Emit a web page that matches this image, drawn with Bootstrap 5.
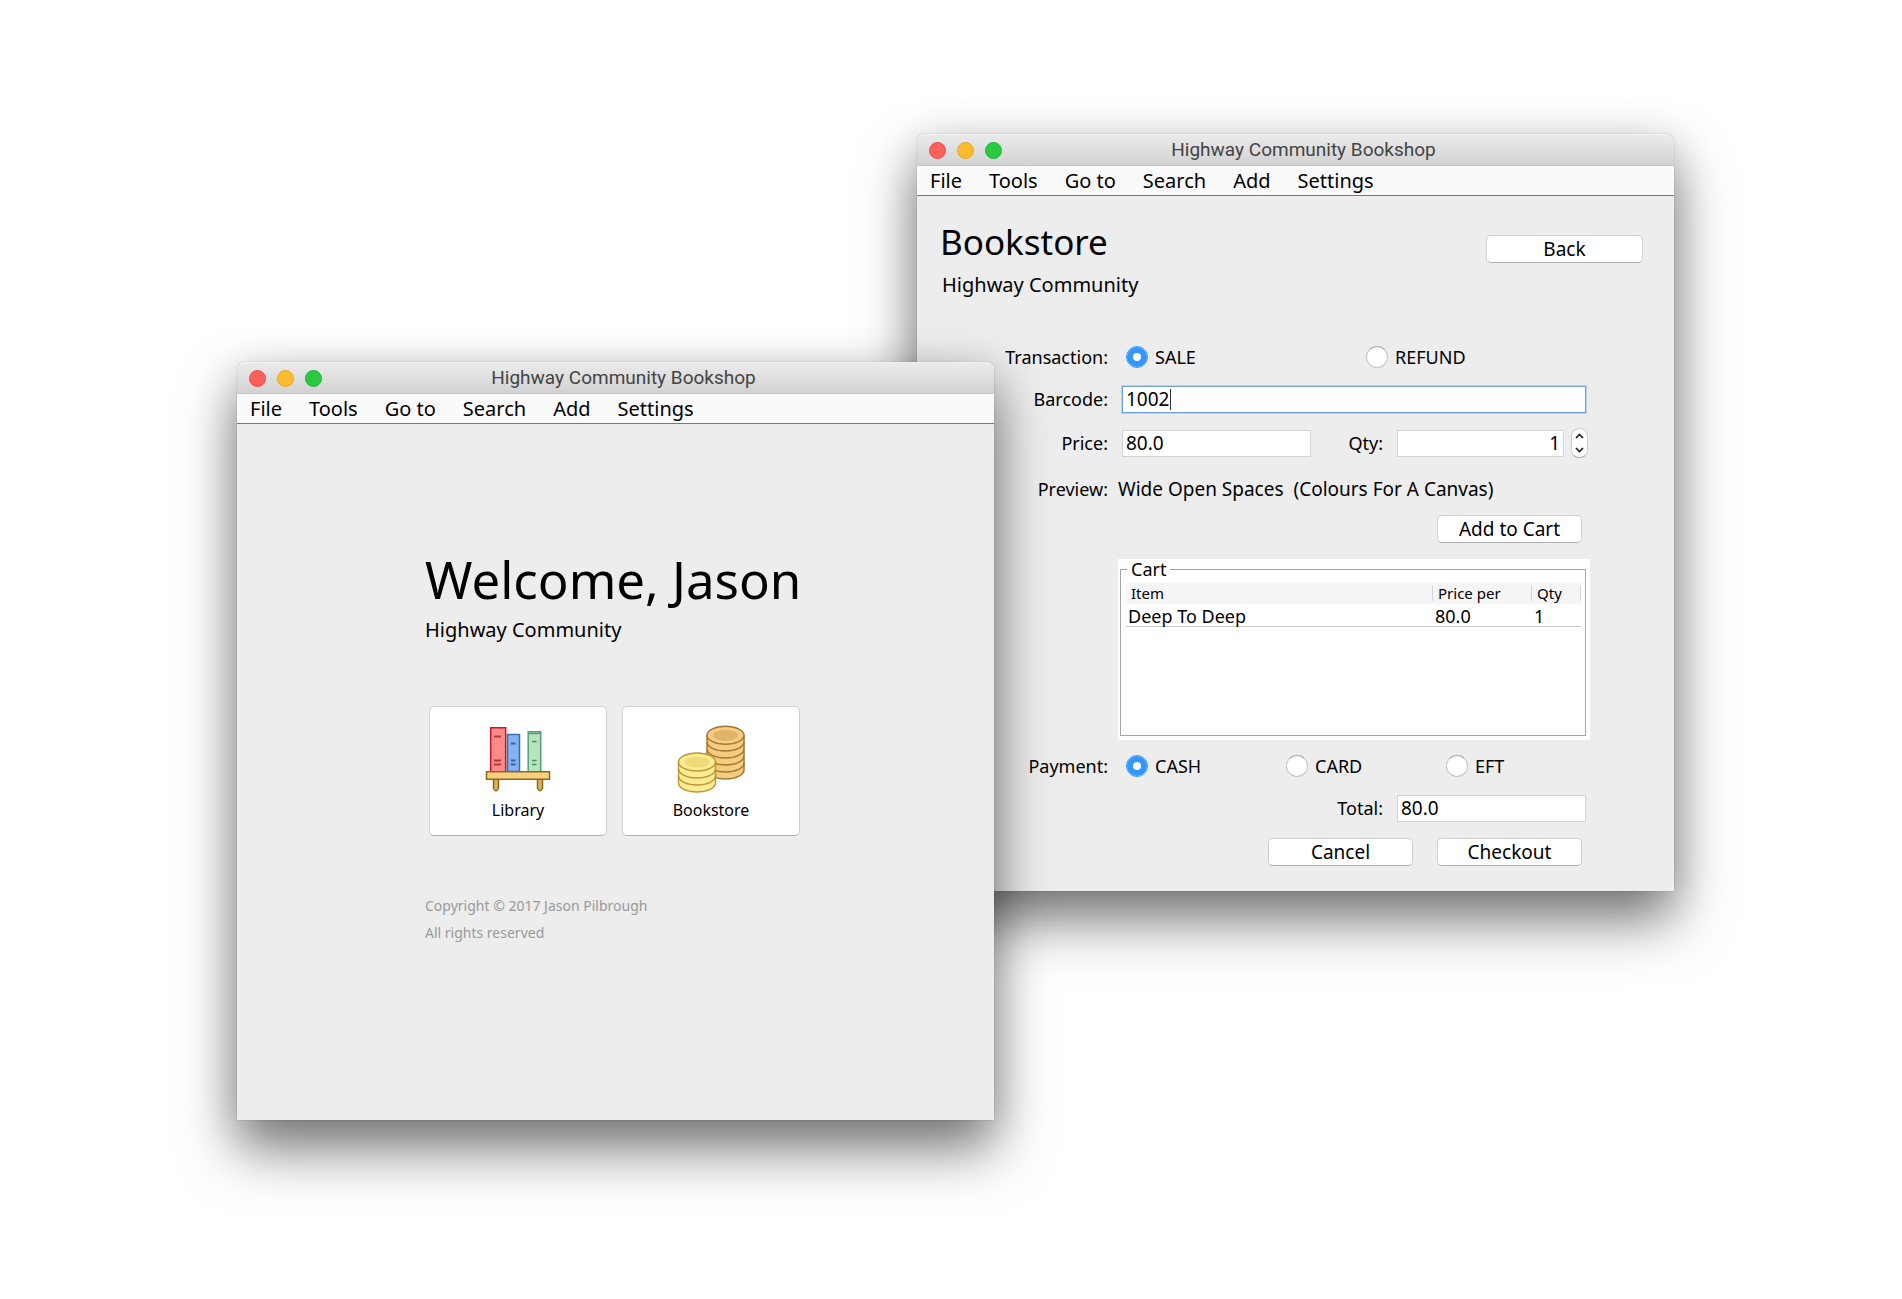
<!DOCTYPE html>
<html lang="en">
<head>
<meta charset="utf-8">
<meta name="viewport" content="width=device-width, initial-scale=1">
<title>Highway Community Bookshop</title>
<link href="https://cdn.jsdelivr.net/npm/bootstrap@5.3.0/dist/css/bootstrap.min.css" rel="stylesheet">
<style>
  body { background: #fff; color: #000; font: 18px/28px "Noto Sans", sans-serif; }
  .desktop { min-height: 100vh; }

  /* windows are freely placed on the desktop */
  .app-window {
    width: 757px;
    background: #ededed;
    border-radius: 7px 7px 0 0;
    box-shadow: 0 0 1px rgba(0,0,0,.5), 0 30px 55px rgba(0,0,0,.5), 0 6px 44px rgba(0,0,0,.14);
  }
  .win-shop { left: 917px; top: 134px; }
  .win-home { left: 237px; top: 362px; z-index: 2; }

  .title-bar {
    height: 32px;
    padding: 0 12px;
    background: linear-gradient(#ebebeb, #d2d2d2);
    border-top: 1px solid #f2f2f2;
    border-bottom: 1px solid #c4c4c4;
    border-radius: 7px 7px 0 0;
    font-family: Roboto, sans-serif;
    color: #444;
  }
  .light { width: 17px; height: 17px; border-radius: 50%; border: 1px solid; padding: 0; }
  .light-close { background: #fc605b; border-color: #e4504a; }
  .light-min { background: #fdbc2f; border-color: #e3a32b; }
  .light-max { background: #29ca41; border-color: #24b339; }
  .title-side { width: 80px; gap: 11px; }
  .title-end { width: 64px; }
  .title-name { font-size: 19px; line-height: 28px; }

  .menu-bar { height: 30px; padding: 0 13px; gap: 27px; background: #fafafa; border-bottom: 1px solid #777; }
  .menu-bar a { color: #000; text-decoration: none; font-size: 20px; }
  .sub-title { font-size: 20px; line-height: 30px; }

  .mac-btn {
    background: #fff; border: 1px solid #d0d0d0; border-bottom-color: #b0b0b0; border-radius: 5px;
    padding: 0; height: 28px; width: 145px; line-height: 26px; color: #000; font-size: 19px;
  }
  .mac-btn:hover { background: #f7f7f7; border-color: #b0b0b0; }

  /* bookstore window */
  .shop-head { padding: 23px 31px 43px 23px; }
  .shop-head h1 { font-size: 35px; line-height: 46px; font-weight: 400; margin: 0 0 5px; }
  .shop-head .sub-title { padding-left: 2px; }
  .shop-head .mac-btn { width: 157px; margin-top: 16px; }
  .shop-form { padding: 0 84px 25px 0; }
  .form-line { min-height: 28px; }
  .line-label { flex: 0 0 201px; padding-right: 10px; text-align: right; }
  .line-body { padding: 0 4px; }
  .mid-label { width: 86px; padding-right: 14px; text-align: right; }
  .preview-text { font-size: 19px; }
  .gap-s { margin-top: 12px; }
  .gap-n { margin-top: 14px; }
  .gap-m { margin-top: 16px; }
  .field {
    height: 27px; padding: 0 3px; border: 1px solid #d4d4d4; border-radius: 0; outline: 0;
    background: #fff; color: #000; font: inherit; font-size: 19px;
  }
  .field-std { width: 189px; }
  .field-qty { width: 167px; }
  .field-focus { border-color: #6fa3de; box-shadow: 0 0 0 1px rgba(120,175,235,.45); }
  .text-caret { left: 48px; top: 3px; width: 1px; height: 21px; background: #333; }
  .choice { width: 160px; padding-left: 4px; gap: 7px; }
  .choice-wide { width: 240px; }
  .form-check-input.mac-radio {
    width: 22px; height: 22px; margin: 0; flex: none; border: 1px solid #c6c6c6; border-top-color: #a8a8a8;
    background-color: #fff; box-shadow: none;
  }
  .form-check-input.mac-radio:checked {
    border-color: #3296fd; background-color: #fff; background-image: none;
    box-shadow: inset 0 0 0 6px #3296fd;
  }
  .stepper { width: 17px; height: 30px; margin: -1px -3px -1px 7px; border-radius: 8px; background: #fff; border: 1px solid #cfcfcf; border-bottom-color: #aaa; }
  .stepper button { flex: 1; display: flex; align-items: center; justify-content: center; padding: 0; border: 0; background: none; }
  .stepper svg { width: 9px; height: 6px; }

  .cart-panel { height: 181px; padding: 0 4px 4px 2px; background: #fff; }
  .cart-box { height: 177px; border: 1px solid #a5a5a5; padding: 4px 4px 0 5px; }
  .cart-box legend { float: none; width: auto; margin: 0 0 0 1px; padding: 0 4px; font-size: 18px; line-height: 20px; }
  .cart-table { width: 100%; table-layout: fixed; border-collapse: collapse; }
  .cart-table th { background: #f5f5f5; font-weight: 400; font-size: 15px; padding: 3px 0; }
  .cart-table th span { display: block; line-height: 15px; padding: 0 0 0 5px; border-right: 1px solid #d4d4d4; }
  .cart-table td { line-height: 20px; padding: 2px 0 0 2px; border-bottom: 1px solid #c8c8c8; }
  .col-price { width: 99px; }
  .col-qty { width: 49px; }

  /* welcome window */
  .home-body { padding: 120px 188px 174px; }
  .home-body h1 { font-size: 51px; line-height: 70px; font-weight: 400; white-space: nowrap; margin: 0 0 1px; }
  .tiles { margin: 61px 0 56px 4px; gap: 15px; }
  .mac-btn.tile { height: 130px; width: 178px; padding-top: 3px; font-size: 16px; line-height: 20px; }
  .tile svg { width: 68px; height: 68px; margin-bottom: 7px; }
  .legal { font-size: 14px; line-height: 27px; color: #999; }
</style>
<script src="https://cdn.jsdelivr.net/npm/bootstrap@5.3.0/dist/js/bootstrap.bundle.min.js"></script>
</head>
<body>
<main class="desktop position-relative">

  <section class="app-window win-shop position-absolute" aria-label="Bookstore">
    <header class="title-bar d-flex align-items-center justify-content-between">
      <div class="title-side d-flex">
        <button type="button" class="light light-close" aria-label="Close"></button>
        <button type="button" class="light light-min" aria-label="Minimise"></button>
        <button type="button" class="light light-max" aria-label="Zoom"></button>
      </div>
      <div class="title-name">Highway Community Bookshop</div>
      <div class="title-end"></div>
    </header>
    <nav class="menu-bar d-flex align-items-center">
      <a href="#">File</a><a href="#">Tools</a><a href="#">Go to</a><a href="#">Search</a><a href="#">Add</a><a href="#">Settings</a>
    </nav>

    <div class="shop-head d-flex justify-content-between align-items-start">
      <div>
        <h1>Bookstore</h1>
        <div class="sub-title">Highway Community</div>
      </div>
      <button type="button" class="btn mac-btn">Back</button>
    </div>

    <form class="shop-form">
      <div class="form-line d-flex align-items-center">
        <div class="line-label">Transaction:</div>
        <div class="line-body flex-grow-1 d-flex">
          <div class="choice choice-wide d-flex align-items-center"><input class="form-check-input mac-radio" type="radio" name="tx" id="sale" checked><label for="sale">SALE</label></div>
          <div class="choice d-flex align-items-center"><input class="form-check-input mac-radio" type="radio" name="tx" id="refund"><label for="refund">REFUND</label></div>
        </div>
      </div>
      <div class="form-line gap-n d-flex align-items-center">
        <label class="line-label" for="barcode">Barcode:</label>
        <div class="line-body flex-grow-1">
          <div class="position-relative d-flex">
            <input class="field field-focus w-100" id="barcode" type="text" value="1002">
            <span class="text-caret position-absolute"></span>
          </div>
        </div>
      </div>
      <div class="form-line gap-m d-flex align-items-center">
        <label class="line-label" for="price">Price:</label>
        <div class="line-body flex-grow-1 d-flex align-items-center">
          <input class="field field-std" id="price" type="text" value="80.0">
          <label class="mid-label" for="qty">Qty:</label>
          <input class="field field-qty text-end" id="qty" type="text" value="1">
          <div class="stepper d-flex flex-column">
            <button type="button" aria-label="Increase"><svg viewBox="0 0 9 6" fill="none" stroke="#222" stroke-width="1.7"><path d="M1 5l3.500-3.500L8 5"/></svg></button>
            <button type="button" aria-label="Decrease"><svg viewBox="0 0 9 6" fill="none" stroke="#222" stroke-width="1.7"><path d="M1 1l3.500 3.500L8 1"/></svg></button>
          </div>
        </div>
      </div>
      <div class="form-line pt-1 gap-n d-flex align-items-center">
        <div class="line-label">Preview:</div>
        <div class="preview-text">Wide Open Spaces&nbsp; (Colours For A Canvas)</div>
      </div>
      <div class="gap-s d-flex justify-content-end pe-2">
        <button type="button" class="btn mac-btn">Add to Cart</button>
      </div>
      <div class="gap-m d-flex">
        <div class="line-label"></div>
        <div class="cart-panel flex-grow-1">
          <fieldset class="cart-box">
            <legend>Cart</legend>
            <table class="cart-table">
              <colgroup><col><col class="col-price"><col class="col-qty"></colgroup>
              <thead><tr><th><span>Item</span></th><th><span>Price per</span></th><th><span>Qty</span></th></tr></thead>
              <tbody><tr><td>Deep To Deep</td><td>80.0</td><td>1</td></tr></tbody>
            </table>
          </fieldset>
        </div>
      </div>
      <div class="form-line gap-s d-flex align-items-center">
        <div class="line-label">Payment:</div>
        <div class="line-body flex-grow-1 d-flex">
          <div class="choice d-flex align-items-center"><input class="form-check-input mac-radio" type="radio" name="pay" id="cash" checked><label for="cash">CASH</label></div>
          <div class="choice d-flex align-items-center"><input class="form-check-input mac-radio" type="radio" name="pay" id="card"><label for="card">CARD</label></div>
          <div class="choice flex-grow-1 d-flex align-items-center"><input class="form-check-input mac-radio" type="radio" name="pay" id="eft"><label for="eft">EFT</label></div>
        </div>
      </div>
      <div class="form-line gap-n line-body d-flex align-items-center justify-content-end">
        <label class="mid-label" for="total">Total:</label>
        <input class="field field-std" id="total" type="text" value="80.0">
      </div>
      <div class="gap-m d-flex justify-content-end gap-4 pe-2">
        <button type="button" class="btn mac-btn">Cancel</button>
        <button type="button" class="btn mac-btn">Checkout</button>
      </div>
    </form>
  </section>

  <section class="app-window win-home position-absolute" aria-label="Welcome">
    <header class="title-bar d-flex align-items-center justify-content-between">
      <div class="title-side d-flex">
        <button type="button" class="light light-close" aria-label="Close"></button>
        <button type="button" class="light light-min" aria-label="Minimise"></button>
        <button type="button" class="light light-max" aria-label="Zoom"></button>
      </div>
      <div class="title-name">Highway Community Bookshop</div>
      <div class="title-end"></div>
    </header>
    <nav class="menu-bar d-flex align-items-center">
      <a href="#">File</a><a href="#">Tools</a><a href="#">Go to</a><a href="#">Search</a><a href="#">Add</a><a href="#">Settings</a>
    </nav>
    <div class="home-body">
      <h1>Welcome, Jason</h1>
      <div class="sub-title">Highway Community</div>
      <div class="tiles d-flex">
        <button type="button" class="btn mac-btn tile d-flex flex-column align-items-center justify-content-center">
          <svg viewBox="64 24 68 68" aria-hidden="true">
            <g stroke-width="1.500">
              <path d="M70.700 26.700h15v44h-15z" fill="#f98b8b" stroke="#c9181e"/>
              <path d="M87.500 33.500h12v37h-12z" fill="#86b2f2" stroke="#3a6cb4"/>
              <path d="M108.200 30.700h12.500v40h-12.500z" fill="#b9e2bd" stroke="#4f9f78"/>
            </g>
            <path d="M74 35.500h7M74 59.500h7M74 63.500h7" stroke="#c2333a" stroke-width="1.800"/>
            <path d="M91 42.500h4.500M91 59.500h4.500M91 63.500h4.500" stroke="#3762a5" stroke-width="1.800"/>
            <path d="M112 40.500h4.500M112 59.500h4.500M112 63.500h4.500" stroke="#459069" stroke-width="1.600"/>
            <path d="M109 32.500h11" stroke="#4f9f78" stroke-width="1.500"/>
            <g stroke="#8c6a14" stroke-width="1.500">
              <path d="M73.500 78v9.500q2.500 4.500 5 0V78zM117.500 78v9.500q2.500 4.500 5 0V78z" fill="#d9b266"/>
              <path d="M66.500 70.700h63v7.600h-63z" fill="#f6d080"/>
            </g>
          </svg>
          Library
        </button>
        <button type="button" class="btn mac-btn tile d-flex flex-column align-items-center justify-content-center">
          <svg viewBox="62 24 68 68" aria-hidden="true">
            <g fill="#f5cc80" stroke="#a17a33" stroke-width="1.500">
              <path d="M92 34.500V69a18.500 9 0 0 0 37 0V34.500z"/>
              <path d="M92 41a18.500 9 0 0 0 37 0M92 48a18.500 9 0 0 0 37 0M92 55a18.500 9 0 0 0 37 0M92 62a18.500 9 0 0 0 37 0" fill="none"/>
              <ellipse cx="110.500" cy="34.300" rx="18.500" ry="9"/>
            </g>
            <ellipse cx="110.500" cy="34.300" rx="12.500" ry="5.500" fill="#dfb468"/>
            <g fill="#fdeb93" stroke="#b99a3a" stroke-width="1.500">
              <path d="M63.500 61V82a18.500 9 0 0 0 37 0V61z"/>
              <path d="M63.500 68a18.500 9 0 0 0 37 0M63.500 75a18.500 9 0 0 0 37 0" fill="none"/>
              <ellipse cx="82" cy="61" rx="18.500" ry="9"/>
            </g>
            <ellipse cx="82" cy="61" rx="12.500" ry="5.500" fill="#f0db7c"/>
          </svg>
          Bookstore
        </button>
      </div>
      <div class="legal">Copyright © 2017 Jason Pilbrough</div>
      <div class="legal">All rights reserved</div>
    </div>
  </section>
</main>
</body>
</html>
